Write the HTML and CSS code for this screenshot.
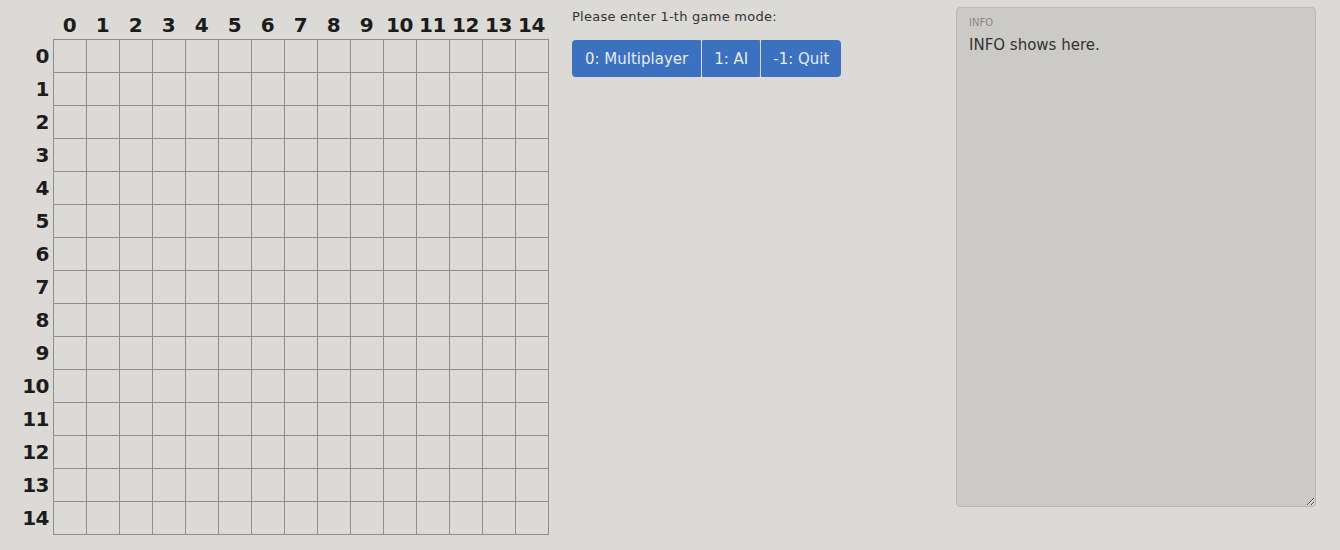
FILE: index.html
```
<!DOCTYPE html>
<html>
<head>
<meta charset="utf-8">
<link rel="stylesheet" href="styles.css">
</head>
<body>
<div class="page">
  <div class="board">
    <div class="corner"></div>
    <div class="colheads">
      <span>0</span><span>1</span><span>2</span><span>3</span><span>4</span><span>5</span><span>6</span><span>7</span><span>8</span><span>9</span><span>10</span><span>11</span><span>12</span><span>13</span><span>14</span>
    </div>
    <div class="rowheads">
      <span>0</span><span>1</span><span>2</span><span>3</span><span>4</span><span>5</span><span>6</span><span>7</span><span>8</span><span>9</span><span>10</span><span>11</span><span>12</span><span>13</span><span>14</span>
    </div>
    <div class="cells" id="cells"></div>
  </div>
  <div class="controls">
    <div class="prompt">Please enter 1-th game mode:</div>
    <div class="btn-group">
      <button class="btn">0: Multiplayer</button><button class="btn">1: AI</button><button class="btn">-1: Quit</button>
    </div>
  </div>
  <div class="info">
    <div class="info-label">INFO</div>
    <textarea class="info-text">INFO shows here.</textarea>
  </div>
</div>
<script>
  var c = document.getElementById('cells');
  for (var i = 0; i < 225; i++) { var d = document.createElement('div'); d.className = 'cell'; c.appendChild(d); }
</script>
</body>
</html>
```
FILE: styles.css
```
html, body {
  margin: 0;
  padding: 0;
  background: #dcdad6;
  font-family: "DejaVu Sans", sans-serif;
  color: #222;
}
.page {
  display: flex;
  align-items: flex-start;
  height: 550px;
}
.board {
  display: grid;
  grid-template-columns: 53px 496px;
  grid-template-rows: 39px 496px;
}
.colheads {
  display: grid;
  grid-template-columns: repeat(15, 33px);
  align-items: end;
}
.colheads span {
  text-align: center;
  font-weight: bold;
  font-size: 20px;
  line-height: 24px;
  padding-bottom: 2px;
  letter-spacing: -0.5px;
  color: #1c1c1c;
}
.rowheads {
  display: grid;
  grid-template-rows: repeat(15, 33px);
}
.rowheads span {
  text-align: right;
  padding-right: 4px;
  padding-top: 1px;
  font-weight: bold;
  font-size: 20px;
  line-height: 33px;
  letter-spacing: -0.5px;
  color: #1c1c1c;
}
.cells {
  display: grid;
  grid-template-columns: repeat(15, 33px);
  grid-template-rows: repeat(15, 33px);
  border-right: 1px solid #928d86;
  border-bottom: 1px solid #928d86;
}
.cell {
  border-left: 1px solid #928d86;
  border-top: 1px solid #928d86;
}
.controls {
  margin-left: 23px;
  padding-top: 8px;
  width: 384px;
}
.prompt {
  font-size: 13px;
  letter-spacing: 0.25px;
  color: #333;
  line-height: 17px;
}
.btn-group {
  margin-top: 15px;
  display: flex;
  gap: 1px;
}
.btn {
  font-family: "DejaVu Sans", sans-serif;
  background: #3c71c0;
  color: #e6ecf7;
  border: none;
  font-size: 15px;
  height: 37px;
  padding: 0 12px;
  padding-top: 1px;
  border-radius: 1px;
}
.btn:nth-child(1) { padding: 1px 13px 0; }
.btn:first-child { border-radius: 4px 1px 1px 4px; }
.btn:last-child { border-radius: 1px 4px 4px 1px; }
.info {
  margin-top: 7px;
  width: 358px;
  height: 498px;
  background: #cccac6;
  border: 1px solid #bdbab5;
  border-radius: 4px;
  display: flex;
  flex-direction: column;
  padding: 0;
}
.info-label {
  font-size: 10px;
  color: #8a8782;
  padding: 9px 12px 0;
  line-height: 12px;
}
.info-text {
  flex: 1;
  background: transparent;
  border: none;
  outline: none;
  font-family: "DejaVu Sans", sans-serif;
  font-size: 15px;
  color: #333;
  padding: 7px 12px;
  resize: vertical;
}
```
